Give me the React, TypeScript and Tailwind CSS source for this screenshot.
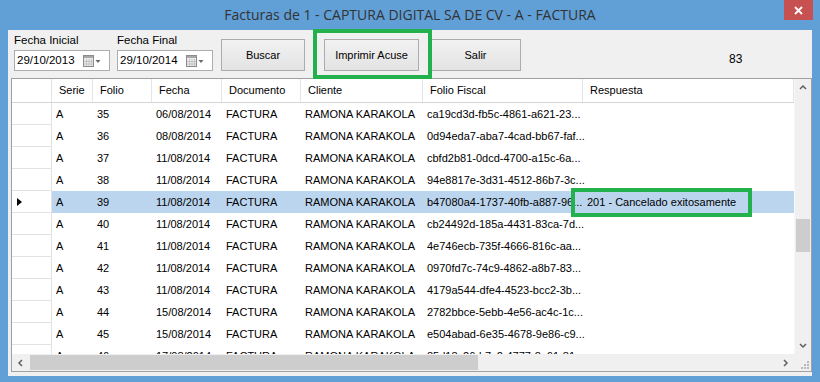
import { clsx } from "clsx";

type Row = [string, string, string, string, string, string, string];

const rows: Row[] = [
  ["A", "35", "06/08/2014", "FACTURA", "RAMONA KARAKOLA", "ca19cd3d-fb5c-4861-a621-23...", ""],
  ["A", "36", "08/08/2014", "FACTURA", "RAMONA KARAKOLA", "0d94eda7-aba7-4cad-bb67-faf...", ""],
  ["A", "37", "11/08/2014", "FACTURA", "RAMONA KARAKOLA", "cbfd2b81-0dcd-4700-a15c-6a...", ""],
  ["A", "38", "11/08/2014", "FACTURA", "RAMONA KARAKOLA", "94e8817e-3d31-4512-86b7-3c...", ""],
  ["A", "39", "11/08/2014", "FACTURA", "RAMONA KARAKOLA", "b47080a4-1737-40fb-a887-96...", "201 - Cancelado exitosamente"],
  ["A", "40", "11/08/2014", "FACTURA", "RAMONA KARAKOLA", "cb24492d-185a-4431-83ca-7d...", ""],
  ["A", "41", "11/08/2014", "FACTURA", "RAMONA KARAKOLA", "4e746ecb-735f-4666-816c-aa...", ""],
  ["A", "42", "11/08/2014", "FACTURA", "RAMONA KARAKOLA", "0970fd7c-74c9-4862-a8b7-83...", ""],
  ["A", "43", "11/08/2014", "FACTURA", "RAMONA KARAKOLA", "4179a544-dfe4-4523-bcc2-3b...", ""],
  ["A", "44", "15/08/2014", "FACTURA", "RAMONA KARAKOLA", "2782bbce-5ebb-4e56-ac4c-1c...", ""],
  ["A", "45", "15/08/2014", "FACTURA", "RAMONA KARAKOLA", "e504abad-6e35-4678-9e86-c9...", ""],
  ["A", "46", "17/08/2014", "FACTURA", "RAMONA KARAKOLA", "85d18c26-b7c2-4777-8e61-81...", ""],
];

const headers = ["Serie", "Folio", "Fecha", "Documento", "Cliente", "Folio Fiscal", "Respuesta"];
const widths = ["w-[41px]", "w-[59px]", "w-[70px]", "w-[79px]", "w-[122px]", "w-[160px]", "flex-1"];

function CalendarIcon() {
  return (
    <svg width="18" height="12" viewBox="0 0 18 12">
      <rect x="0.5" y="0.5" width="10" height="11" fill="#ececec" stroke="#8c8c8c" />
      <rect x="1" y="1" width="9" height="2" fill="#a8a8a8" />
      <path d="M3.5 4v7M6 4v7M8.5 4v7M1 6.5h9M1 9h9" stroke="#c4c4c4" strokeWidth="1" />
      <path d="M12.5 5h5l-2.5 3z" fill="#6a6a6a" />
    </svg>
  );
}

function DateField({ label, value, className }: { label: string; value: string; className?: string }) {
  return (
    <div className={clsx("flex flex-col w-[96px]", className)}>
      <span className="mt-[4px] text-[11.5px] leading-[13px]">{label}</span>
      <div className="mt-[3px] h-[21px] bg-white border border-[#abadb3] flex items-center pl-[2px] pr-[8px]">
        <span className="text-[11.5px] flex-1">{value}</span>
        <CalendarIcon />
      </div>
    </div>
  );
}

function Button({ children, className }: { children: React.ReactNode; className?: string }) {
  return (
    <div
      className={clsx(
        "h-[32px] flex items-center justify-center text-[11px] border border-[#acacac] bg-gradient-to-b from-[#f2f2f2] to-[#e3e3e3]",
        className,
      )}
    >
      {children}
    </div>
  );
}

function Chevron({ dir }: { dir: "up" | "down" | "left" | "right" }) {
  const d = {
    up: "M1 5l3-3 3 3",
    down: "M1 2l3 3 3-3",
    left: "M5 1L2 4l3 3",
    right: "M2 1l3 3-3 3",
  }[dir];
  return (
    <svg width="8" height="8" viewBox="0 0 8 8">
      <path d={d} fill="none" stroke="#606060" strokeWidth="1.5" />
    </svg>
  );
}

function GridRow({ r, selected }: { r: Row; selected: boolean }) {
  return (
    <div className="flex h-[22px] shrink-0 text-[11px]">
      <div className="w-[40px] h-full bg-white border-r border-b border-[#e2e2e2] flex items-center pl-[5px]">
        {selected && (
          <svg width="5" height="8" viewBox="0 0 5 8">
            <path d="M0 0l5 4-5 4z" fill="#000" />
          </svg>
        )}
      </div>
      <div className={clsx("flex flex-1 h-full", selected ? "bg-[#bcd5ee]" : "bg-white")}>
        {r.map((c, i) => (
          <div
            key={i}
            className={clsx("h-full flex items-center pl-[4px] whitespace-nowrap relative", widths[i])}
          >
            {c}
            {selected && i === 6 && (
              <div className="absolute left-[-12px] top-[-3px] w-[181px] h-[29px] border-4 border-[#22b14c] z-10" />
            )}
          </div>
        ))}
      </div>
    </div>
  );
}

export default function App() {
  return (
    <div className="w-[820px] h-[382px] bg-[#619fd7] flex flex-col px-[8px] pb-[6px] font-['Liberation_Sans',Arial,sans-serif] text-black overflow-hidden">
      {/* title bar */}
      <div className="h-[30px] shrink-0 relative flex items-center justify-center pb-[2px]">
        <span className="font-['Open_Sans',sans-serif] text-[14px] text-[#333]">
          Facturas de 1 - CAPTURA DIGITAL SA DE CV - A - FACTURA
        </span>
        <div className="absolute right-[-1px] top-0 w-[29px] h-[20px] bg-[#c75050] flex items-center justify-center">
          <svg width="9" height="9" viewBox="0 0 9 9">
            <path d="M1 1l7 7M8 1L1 8" stroke="#fff" strokeWidth="1.8" />
          </svg>
        </div>
      </div>

      {/* client area */}
      <div className="flex-1 bg-[#f0f0f0] flex flex-col">
        <div className="h-[48px] shrink-0 flex items-start pl-[6px]">
          <DateField label="Fecha Inicial" value="29/10/2013" />
          <DateField className="ml-[7px]" label="Fecha Final" value="29/10/2014" />
          <Button className="ml-[8px] mt-[9px] w-[84px]">Buscar</Button>
          <div className="relative ml-[19px] mt-[9px]">
            <Button className="w-[95px]">Imprimir Acuse</Button>
            <div className="absolute left-[-11px] top-[-10px] right-[-13px] bottom-[-8px] border-4 border-[#22b14c] z-10" />
          </div>
          <Button className="ml-[11px] mt-[9px] w-[91px]">Salir</Button>
          <span className="ml-[208px] mt-[20px] text-[12px]">83</span>
        </div>

        {/* data grid */}
        <div className="ml-[3px] h-[294px] shrink-0 border border-[#a0a0a0] bg-white flex flex-col">
          <div className="flex flex-1 min-h-0">
            <div className="flex-1 overflow-hidden flex flex-col">
              <div className="flex h-[24px] shrink-0 text-[11px] border-b border-[#d5d5d5]">
                <div className="w-[40px] h-full border-r border-[#e2e2e2]" />
                {headers.map((h, i) => (
                  <div
                    key={h}
                    className={clsx("h-full flex items-center pl-[7px] border-r border-[#e5e5e5]", widths[i])}
                  >
                    {h}
                  </div>
                ))}
              </div>
              {rows.map((r, i) => (
                <GridRow key={i} r={r} selected={i === 4} />
              ))}
            </div>
            <div className="w-[17px] shrink-0 bg-[#f0f0f0] flex flex-col border-l border-[#f7f7f7]">
              <div className="h-[17px] flex items-center justify-center">
                <Chevron dir="up" />
              </div>
              <div className="flex-1">
                <div className="mt-[123px] ml-[1px] w-[14px] h-[33px] bg-[#cdcdcd]" />
              </div>
              <div className="h-[17px] flex items-center justify-center">
                <Chevron dir="down" />
              </div>
            </div>
          </div>
          <div className="h-[17px] shrink-0 flex bg-[#f0f0f0]">
            <div className="w-[17px] flex items-center justify-center">
              <Chevron dir="left" />
            </div>
            <div className="flex-1 py-[1px]">
              <div className="ml-[1px] w-[448px] h-full bg-[#cdcdcd]" />
            </div>
            <div className="w-[17px] flex items-center justify-center">
              <Chevron dir="right" />
            </div>
            <div className="w-[17px] flex items-end justify-end p-[2px]">
              <svg width="10" height="10" viewBox="0 0 10 10" fill="#b8b8b8">
                <rect x="8" y="2" width="2" height="2" />
                <rect x="5" y="5" width="2" height="2" />
                <rect x="8" y="5" width="2" height="2" />
                <rect x="2" y="8" width="2" height="2" />
                <rect x="5" y="8" width="2" height="2" />
                <rect x="8" y="8" width="2" height="2" />
              </svg>
            </div>
          </div>
        </div>
      </div>
    </div>
  );
}
